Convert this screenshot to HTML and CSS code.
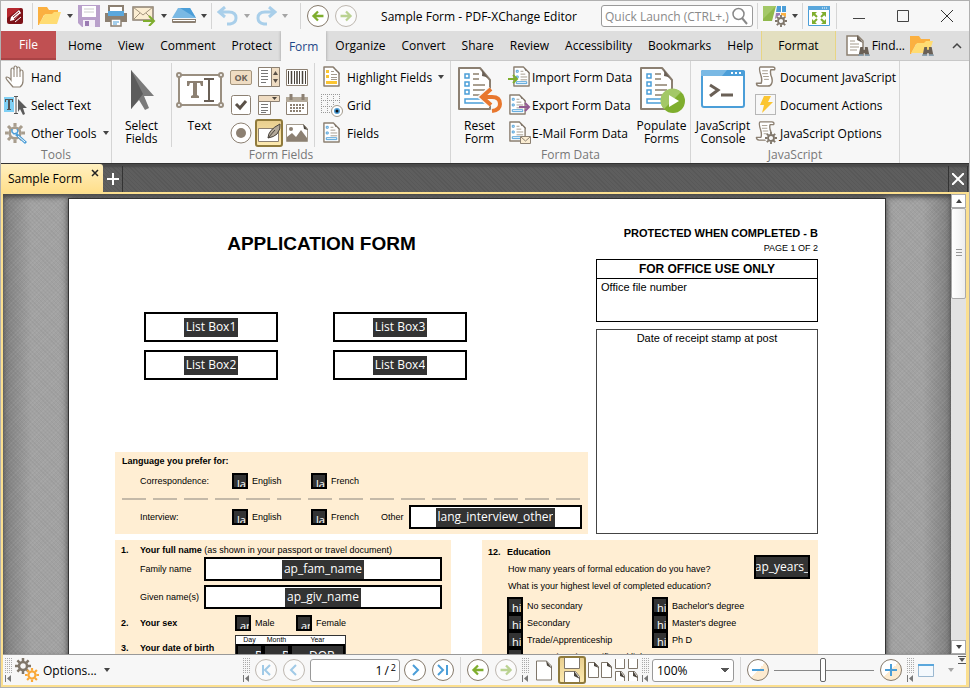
FILE: index.html
```html
<!DOCTYPE html>
<html lang="en">
  <head>
    <meta charset="UTF-8" />
    <meta name="viewport" content="width=device-width, initial-scale=1.0" />
    <title>Sample Form - PDF-XChange Editor</title>
    <link rel="stylesheet" href="styles.css">
  </head>
  <body>
    <!-- shared icons -->
    <svg class="sprite" width="0" height="0">
      <symbol id="folder" viewBox="0 0 24 20">
        <path d="M0 1h9l2 3h9v5H6L1 19H0z" fill="#fbb040" />
        <path d="M7 8h7l2-2h7l-4 12H1z" fill="#ffdc73" />
      </symbol>
      <symbol id="doc" viewBox="0 0 20 22">
        <path d="M2 1h10l6 6v14H2z" fill="#fff" stroke="#8c8072" stroke-width="1.500" stroke-linejoin="round" />
        <path d="M11 0l8 9q-1-4-5-4-1-4-3-5z" fill="#6a6056" />
        <path d="M9 5.500h3M9 8.500h5M9 11.500h7M9 14.500h7" stroke="#a39a8c" />
        <path d="M4.500 4.500h2v2h-2zM4.500 10.500h2v2h-2zM4.500 16.500h11v2h-11z" fill="#fff" stroke="#4b9ed8" />
      </symbol>
      <symbol id="bigdoc" viewBox="0 0 36 44">
        <path d="M2 1h21l10 12v29H2z" fill="#fff" stroke="#8c8072" stroke-width="2" stroke-linejoin="round" />
        <path d="M23 0l11 15q-2-5-9-6 1-6-2-9z" fill="#6a6056" />
        <path d="M16 7h6M16 12h6M16 18h12M16 23h12M16 28h10" stroke="#a99f90" stroke-width="2" />
        <path d="M8 7h4v4H8zM8 15h4v4H8zM8 23h4v4H8zM8 32h20v4H8z" fill="#fff" stroke="#4b9ed8" stroke-width="1.500" />
      </symbol>
      <symbol id="scroll" viewBox="0 0 22 22">
        <path d="M5 1h13q3 0 2 3h-4q-1 4 1 8 1 4 0 6-1 3-4 3H4q-3 0-3-3h5q1-3 0-7Q3 2 5 1z" fill="#fff" stroke="#8c8072" stroke-width="1.500" stroke-linejoin="round" />
        <path d="M7 5h6M7 8h6M8 11h6M9 14h5" stroke="#a39a8c" />
      </symbol>
      <symbol id="gear" viewBox="0 0 16 16">
        <circle cx="8" cy="8" r="4" fill="none" stroke="currentColor" stroke-width="2.500" />
        <path d="M8 0v3M8 13v3M0 8h3M13 8h3M2.400 2.400l2.200 2.200M11.400 11.400l2.200 2.200M13.600 2.400l-2.200 2.200M4.600 11.400l-2.200 2.200" stroke="currentColor" stroke-width="2.500" />
      </symbol>
      <symbol id="binoc" viewBox="0 0 12 12">
        <path d="M2 1h3v3h2V1h3l2 10H7V8H5v3H0z" fill="#6a6056" />
        <path d="M0 9h5v2H0zM7 9h5v2H7z" fill="#8aa0b0" />
      </symbol>
      <symbol id="page" viewBox="0 0 16 20">
        <path d="M.500 .500h10l5 5v14H.500z" fill="#fff" stroke="#7f766a" />
        <path d="M10 0l6 8-5-3z" fill="#4a443c" />
      </symbol>
      <symbol id="left" viewBox="0 0 22 22">
        <path d="M17 11H6M11 6l-5 5 5 5" fill="none" stroke="#7fae2e" stroke-width="2.500" />
      </symbol>
      <symbol id="right" viewBox="0 0 22 22">
        <path d="M5 11h11M11 6l5 5-5 5" fill="none" stroke="#7fae2e" stroke-width="2.500" />
      </symbol>
      <symbol id="undo" viewBox="0 0 22 20">
        <path d="M8 1L2 6l6 5M3 6h9q7 0 7 6 0 5-6 6h-3" fill="none" stroke="#a9cfea" stroke-width="3" />
      </symbol>
      <symbol id="grip" viewBox="0 0 7 24">
        <path d="M.500 0v16M2.500 0v16M4.500 0v16M6.500 0v16" stroke="#aaa" stroke-dasharray="1 1" />
        <path d="M.500 17v7" stroke="#777" />
        <path d="M6 17v7l-4-3.500z" fill="#777" />
      </symbol>
    </svg>

    <div class="window">
      <header class="titlebar">
        <svg class="logo" width="16" height="16" viewBox="0 0 16 16">
          <rect width="16" height="16" rx="2" fill="#7d1218" />
          <path d="M0 2q0-2 2-2h12L0 10z" fill="#b5282f" />
          <path d="M3 13l1-4 8-7 2 3-7 7z" fill="#fff" />
          <path d="M6 9l6-5M7 11l6-5" stroke="#8a1a1f" />
          <path d="M8 14l6-5" stroke="#fff" />
        </svg>
        <i class="sep"></i>
        <button class="tool" aria-label="Open"><svg width="24" height="20"><use href="#folder" /></svg></button>
        <button class="caret" aria-label="Open menu"></button>
        <button class="tool" aria-label="Save">
          <svg width="22" height="22" viewBox="0 0 22 22">
            <path d="M0 0h22v22H4l-4-4z" fill="#b9a0cb" />
            <path d="M4 1h14v11H4z" fill="#fff" />
            <path d="M6 4h10M6 7h10" stroke="#ccc" />
            <path d="M5 15h12v7H5z" fill="#f4eff7" />
            <path d="M7 16h4v5H7z" fill="#9b7bb3" />
          </svg>
        </button>
        <button class="tool" aria-label="Print">
          <svg width="22" height="22" viewBox="0 0 22 22">
            <path d="M4 1h14v8H4z" fill="#fff" stroke="#8c8072" stroke-width="2" />
            <path d="M3 6h16v5H3z" fill="#5aa7dc" />
            <path d="M0 8h3v3h16V8h3v9H0z" fill="#8c8072" />
            <path d="M6 14h10v7H6z" fill="#fff" stroke="#8c8072" stroke-width="1.500" />
            <path d="M8 17h6M8 19h4" stroke="#4b9ed8" />
          </svg>
        </button>
        <button class="tool" aria-label="Send by mail">
          <svg width="24" height="20" viewBox="0 0 24 20">
            <path d="M1 1h20v13H1z" fill="#fbedd2" stroke="#8c8072" stroke-width="1.500" />
            <path d="M1 1l10 8L21 1M1 14l7-7M21 14l-7-7" fill="none" stroke="#a3947d" />
            <path d="M11 15h10M17 10l5 5-5 5" fill="none" stroke="#7fae2e" stroke-width="2" />
          </svg>
        </button>
        <button class="caret" aria-label="Mail menu"></button>
        <button class="tool" aria-label="Scan">
          <svg width="24" height="16" viewBox="0 0 24 16">
            <path d="M6 0h12l6 10H0z" fill="#7ab9e4" />
            <path d="M8 0h10l6 10z" fill="#4b9ed8" />
            <path d="M0 11h24v3q0 1-1 1H1q-1 0-1-1z" fill="#8c8072" />
            <path d="M1 12h22v1H1z" fill="#fff" />
          </svg>
        </button>
        <button class="caret" aria-label="Scan menu"></button>
        <i class="sep"></i>
        <button class="tool" aria-label="Undo"><svg width="22" height="20"><use href="#undo" /></svg></button>
        <button class="caret dim" aria-label="Undo menu"></button>
        <button class="tool" aria-label="Redo"><svg class="flip" width="22" height="20"><use href="#undo" /></svg></button>
        <button class="caret dim" aria-label="Redo menu"></button>
        <i class="sep"></i>
        <button class="round" aria-label="Back"><svg width="20" height="20"><use href="#left" /></svg></button>
        <button class="round faded" aria-label="Forward"><svg width="20" height="20"><use href="#right" /></svg></button>
        <h1 class="title">Sample Form - PDF-XChange Editor</h1>
        <label class="launch">
          <input type="text" placeholder="Quick Launch (CTRL+.)" aria-label="Quick Launch" />
          <svg width="16" height="18" viewBox="0 0 16 18">
            <circle cx="6.500" cy="7" r="5.500" fill="none" stroke="#888" stroke-width="1.500" />
            <path d="M10 11l5 6" stroke="#888" stroke-width="2" />
          </svg>
        </label>
        <i class="sep"></i>
        <button class="tool" aria-label="Toolbars">
          <svg width="24" height="21" viewBox="0 0 24 21">
            <path d="M0 0h13L9 15H0z" fill="#8fb84b" />
            <path d="M0 0h13L0 13z" fill="#a3c867" />
            <path d="M14 0h9v6H13z" fill="#4b9ed8" />
            <path d="M18 0h1v6h-1z" fill="#fff" />
            <path d="M13 7h4v6h-5z" fill="#9b7bb3" />
            <path d="M18 7h5v7h-5z" fill="#fbb040" />
            <circle cx="18" cy="15" r="6" fill="#f7f7f7" />
            <use href="#gear" x="12" y="9" width="12" height="12" color="#7f766a" />
          </svg>
        </button>
        <button class="caret" aria-label="Toolbars menu"></button>
        <i class="sep"></i>
        <button class="tool" aria-label="Full screen">
          <svg width="22" height="20" viewBox="0 0 22 20">
            <path d="M.500 .500h21v19H.500z" fill="#fff" stroke="#4b9ed8" />
            <path d="M0 0h22v4H0z" fill="#5aa7dc" />
            <path d="M14 2h1M16 2h1M18 2h1" stroke="#fff" />
            <path d="M4 6h5L4 11zM18 6h-5l5 5zM4 18h5l-5-5zM18 18h-5l5-5z" fill="#7fae2e" />
            <path d="M5 7l4 4M17 7l-4 4M5 17l4-4M17 17l-4-4" stroke="#7fae2e" stroke-width="2" />
          </svg>
        </button>
        <i class="sep last"></i>
        <nav class="controls">
          <button aria-label="Minimize"><svg width="12" height="12"><path d="M0 8.500h12" stroke="#444" /></svg></button>
          <button aria-label="Maximize"><svg width="12" height="12"><path d="M.500 .500h11v11H.500z" fill="none" stroke="#444" /></svg></button>
          <button aria-label="Close"><svg width="12" height="12"><path d="M0 0l12 12M12 0L0 12" stroke="#333" /></svg></button>
        </nav>
      </header>

      <nav class="tabs">
        <button class="file">File</button>
        <button>Home</button>
        <button>View</button>
        <button>Comment</button>
        <button>Protect</button>
        <button class="active">Form</button>
        <button>Organize</button>
        <button>Convert</button>
        <button>Share</button>
        <button>Review</button>
        <button>Accessibility</button>
        <button>Bookmarks</button>
        <button>Help</button>
        <button class="format">Format</button>
        <button class="find">
          <svg width="24" height="22" viewBox="0 0 24 22">
            <path d="M1 1h11l5 5v14H1z" fill="#fff" stroke="#8c8072" stroke-width="1.500" />
            <path d="M11 0l6 8-6-3z" fill="#6a6056" />
            <path d="M4 6h5M4 9h9M4 12h9M4 15h7" stroke="#a39a8c" />
            <use href="#binoc" x="12" y="11" width="12" height="11" />
          </svg>
          Find...
        </button>
        <button class="find" aria-label="Search folder">
          <svg width="24" height="22" viewBox="0 0 24 22">
            <use href="#folder" width="24" height="20" />
            <use href="#binoc" x="12" y="11" width="12" height="11" />
          </svg>
        </button>
        <button class="collapse" aria-label="Collapse ribbon"><svg width="10" height="7"><path d="M1 6l4-4 4 4" fill="none" stroke="#444" stroke-width="1.500" /></svg></button>
      </nav>

      <section class="ribbon">
        <div class="group tools">
          <div class="items">
            <div class="column">
              <button class="row">
                <svg width="24" height="24" viewBox="0 0 24 24">
                  <path d="M9 22l-6-7q-2-3 0-3 2 0 4 3V5q0-2 1.500-2T10 5V3q0-2 1.500-2T13 3v1q0-2 1.500-2T16 4v3q0-2 1.500-2T19 7v9q0 4-3 6z" fill="#fff" stroke="#8c8072" stroke-width="1.200" />
                  <path d="M10 5v7M13 4v8M16 7v5" stroke="#8c8072" />
                </svg>
                Hand
              </button>
              <button class="row">
                <svg width="24" height="24" viewBox="0 0 24 24">
                  <path d="M0 4h10v15H0z" fill="#7fd0f5" />
                  <path d="M1 6h8v3H8V7H6v9h1v1H3v-1h1V7H2v2H1z" fill="#555" />
                  <path d="M10 3.500h4M12 4v16M10 20.500h4" stroke="#555" />
                  <path d="M14 6l9 9h-4l2 6-2 1-3-6-2 3z" fill="#5b5b5b" />
                </svg>
                Select Text
              </button>
              <button class="row">
                <svg width="24" height="24" viewBox="0 0 24 24">
                  <use href="#gear" x="1" y="2" width="20" height="20" color="#a89d8d" />
                  <circle cx="11" cy="12" r="4" fill="#f7f7f7" />
                  <path d="M12 13l10 9" stroke="#4b9ed8" stroke-width="3" />
                  <path d="M14 15l7 6" stroke="#fff" />
                  <path d="M8 8v3l2 2 3-1 1-2-1-2" fill="none" stroke="#4b9ed8" stroke-width="1.500" />
                </svg>
                Other Tools
                <span class="arrow"></span>
              </button>
            </div>
          </div>
          <h2>Tools</h2>
        </div>

        <div class="group fields">
          <div class="items">
            <button class="big">
              <svg width="24" height="46" viewBox="0 1 24 46">
                <path d="M1 4v39l8-9 6 10 4-2-5-12h10z" fill="#7b7b7b" />
                <path d="M1 4v39l12-15z" fill="#5c5c5c" />
              </svg>
              Select<br />Fields
            </button>
            <i class="rule"></i>
            <button class="big">
              <svg width="48" height="46" viewBox="0 2 48 46">
                <path d="M3 10h42v30H3z" fill="#fff" stroke="#9a8f80" stroke-width="2" />
                <path d="M11 16h16v5h-2l-1-3h-3v12l2 1v2h-8v-2l2-1V18h-3l-1 3h-2z" fill="#8c8072" />
                <path d="M28 14h10M33 14v22M28 36h10" stroke="#6a6056" stroke-width="2" />
                <g fill="#fff" stroke="#9a8f80" stroke-width="2"><circle cx="3" cy="10" r="2" /><circle cx="45" cy="10" r="2" /><circle cx="3" cy="40" r="2" /><circle cx="45" cy="40" r="2" /></g>
              </svg>
              Text
            </button>
            <div class="widgets">
              <button class="ok"><span>OK</span></button>
              <button aria-label="List box">
                <svg width="22" height="20" viewBox="0 0 22 20">
                  <path d="M.500 .500h21v19H.500z" fill="#fff" stroke="#8c8072" />
                  <path d="M13.500 .500h8v19h-8z" fill="#efdcc2" stroke="#8c8072" />
                  <path d="M15 8l2.500-4L20 8zM15 12l2.500 4 2.500-4z" fill="#5a5148" />
                  <path d="M3 3.500h7M3 6.500h7M3 9.500h7M3 12.500h7M3 15.500h5" stroke="#777" />
                </svg>
              </button>
              <button aria-label="Barcode">
                <svg width="22" height="17" viewBox="0 0 22 17">
                  <path d="M.500 .500h21v16H.500z" fill="#fff" stroke="#8c8072" />
                  <path d="M2.500 2v13M8.500 2v13M13.500 2v13M19.500 2v13" stroke="#4a443c" />
                  <path d="M5.500 2v13M11 2v13M16.500 2v13" stroke="#4a443c" stroke-width="1.500" />
                </svg>
              </button>
              <button aria-label="Check box">
                <svg width="20" height="20" viewBox="0 0 20 20">
                  <rect x=".500" y=".500" width="19" height="19" rx="2" fill="#fff" stroke="#8c8072" />
                  <path d="M5 9l4 4 6-7" fill="none" stroke="#5a5148" stroke-width="3" />
                </svg>
              </button>
              <button aria-label="Drop-down">
                <svg width="22" height="20" viewBox="0 0 22 20">
                  <path d="M.500 6.500h12v13H.500z" fill="#fff" stroke="#8c8072" />
                  <path d="M.500 .500h21v6H.500z" fill="#efdcc2" stroke="#8c8072" />
                  <path d="M14 2h5l-2.500 3z" fill="#4a443c" />
                  <path d="M3 9.500h7M3 12.500h7M3 15.500h7M3 17.500h5" stroke="#777" />
                </svg>
              </button>
              <button aria-label="Date">
                <svg width="22" height="22" viewBox="0 0 22 22">
                  <path d="M.500 4.500h21v16H.500z" fill="#fff" stroke="#8c8072" />
                  <path d="M0 3h22v5H0z" fill="#b3a999" />
                  <path d="M5 0v6M17 0v6" stroke="#8c8072" stroke-width="3" />
                  <path d="M4 11h14M4 14h14M4 17h11" stroke="#8c8072" stroke-width="2" stroke-dasharray="2 1" />
                </svg>
              </button>
              <button aria-label="Radio button">
                <svg width="22" height="22" viewBox="0 0 22 22">
                  <circle cx="11" cy="11" r="10" fill="#fff" stroke="#8c8072" />
                  <circle cx="11" cy="11" r="5" fill="#8c8072" />
                </svg>
              </button>
              <button class="on" aria-label="Signature">
                <svg width="24" height="22" viewBox="0 0 24 22">
                  <path d="M1.500 6.500h20v13h-20z" fill="#fff" stroke="#8c8072" />
                  <path d="M11 16q0-8 12-14 1 5-3 10-3 3-9 4z" fill="#b3a999" stroke="#4a443c" />
                  <path d="M11 16l7-8" stroke="#4a443c" />
                </svg>
              </button>
              <button aria-label="Image">
                <svg width="22" height="18" viewBox="0 0 22 18">
                  <path d="M.500 .500h17l4 4v13H.500z" fill="#fff" stroke="#a39a8c" />
                  <path d="M1 17v-4l5-4 4 4 5-7 6 8v3z" fill="#8c8072" />
                  <circle cx="5" cy="5" r="2" fill="#8c8072" />
                  <path d="M17 0l5 6-4-1z" fill="#4a443c" />
                </svg>
              </button>
            </div>
            <i class="rule"></i>
            <div class="column">
              <button class="row">
                <svg width="24" height="22" viewBox="0 0 24 22">
                  <path d="M4 1h9l6 6v13H4z" fill="#fff" stroke="#8c8072" stroke-width="1.500" stroke-linejoin="round" />
                  <path d="M13 0l7 9q-1-4-4-4-1-4-3-5z" fill="#6a6056" />
                  <path d="M11 5.500h3M11 8.500h6M11 11.500h6M11 13.500h6" stroke="#a39a8c" />
                  <path d="M6 4h3v3H6zM6 9h3v3H6zM6 15h11v3H6z" fill="#fbc531" />
                </svg>
                Highlight Fields
                <span class="arrow"></span>
              </button>
              <button class="row">
                <svg width="24" height="24" viewBox="0 0 24 24">
                  <path d="M1 1.500h20M1 7.500h20M1 13.500h12M1 19.500h10M1.500 1v19M7.500 1v19M13.500 1v12M19.500 1v10" stroke="#999" stroke-dasharray="1 1" />
                  <circle cx="17" cy="18" r="5.500" fill="#fff" stroke="#a39a8c" />
                  <circle cx="17" cy="18" r="3" fill="#4b9ed8" /><circle cx="17" cy="18" r="1.500" fill="#111" />
                </svg>
                Grid
              </button>
              <button class="row">
                <svg width="24" height="22" viewBox="0 0 24 22"><use href="#doc" x="2" width="19" height="21" /></svg>
                Fields
              </button>
            </div>
          </div>
          <h2>Form Fields</h2>
        </div>

        <div class="group data">
          <div class="items">
            <button class="big">
              <svg width="46" height="46" viewBox="0 0 46 46">
                <use href="#bigdoc" width="36" height="44" />
                <path d="M34 22l-9 8 9 8M27 30h8q8 0 8 7 0 6-8 7" fill="none" stroke="#f7f7f7" stroke-width="7" />
                <path d="M34 22l-9 8 9 8M27 30h8q8 0 8 7 0 6-8 7" fill="none" stroke="#e8772e" stroke-width="4" />
              </svg>
              Reset<br />Form
            </button>
            <div class="column">
              <button class="row">
                <svg width="24" height="22" viewBox="0 0 24 22">
                  <use href="#doc" x="4" width="19" height="21" />
                  <path d="M0 13h9M5 9l4 4-4 4" fill="none" stroke="#7fae2e" stroke-width="2" />
                </svg>
                Import Form Data
              </button>
              <button class="row">
                <svg width="24" height="22" viewBox="0 0 24 22">
                  <use href="#doc" width="19" height="21" />
                  <path d="M11 13h10M17 9l4 4-4 4" fill="none" stroke="#925a92" stroke-width="2" />
                </svg>
                Export Form Data
              </button>
              <button class="row">
                <svg width="24" height="24" viewBox="0 0 24 24">
                  <use href="#doc" width="19" height="21" />
                  <path d="M12.500 15.500h10v7h-10z" fill="#fbedd2" stroke="#8c8072" />
                  <path d="M13 16l4.500 4 4.500-4" fill="none" stroke="#8c8072" />
                </svg>
                E-Mail Form Data
              </button>
            </div>
            <button class="big">
              <svg width="46" height="46" viewBox="0 0 46 46">
                <use href="#bigdoc" width="36" height="44" />
                <circle cx="34" cy="34" r="12" fill="#7fae2e" />
                <path d="M25 42a12 12 0 0 1 17-17z" fill="#a3c867" />
                <path d="M30 28l10 6-10 6z" fill="#fff" />
              </svg>
              Populate<br />Forms
            </button>
          </div>
          <h2>Form Data</h2>
        </div>

        <div class="group script">
          <div class="items">
            <button class="big">
              <svg width="44" height="46" viewBox="0 2 44 46">
                <rect x="1" y="6" width="42" height="36" rx="2" fill="#fff" stroke="#4b9ed8" stroke-width="2" />
                <path d="M0 7q0-2 2-2h40q2 0 2 2v4H0z" fill="#4b9ed8" />
                <path d="M0 7q0-2 2-2h24l-5 6H0z" fill="#7ab9e4" />
                <path d="M30 8h2M34 8h2M38 8h2" stroke="#fff" stroke-width="2" />
                <path d="M9 20l8 5-8 6M20 30h12" fill="none" stroke="#6a6056" stroke-width="3" />
              </svg>
              JavaScript<br />Console
            </button>
            <div class="column">
              <button class="row">
                <svg width="22" height="22"><use href="#scroll" width="22" height="21" /></svg>
                Document JavaScript
              </button>
              <button class="row">
                <svg width="22" height="22" viewBox="0 0 22 22">
                  <path d="M.500 .500h20v20H.500z" fill="none" stroke="#777" stroke-dasharray="1 1" />
                  <path d="M9 2h7l-3 6h5L7 19l2-8H5z" fill="#fbc531" />
                </svg>
                Document Actions
              </button>
              <button class="row">
                <svg width="22" height="24" viewBox="0 0 22 24">
                  <use href="#scroll" width="21" height="20" />
                  <circle cx="16" cy="17" r="6" fill="#f7f7f7" />
                  <use href="#gear" x="10" y="11" width="12" height="12" color="#7f766a" />
                </svg>
                JavaScript Options
              </button>
            </div>
          </div>
          <h2>JavaScript</h2>
        </div>
      </section>

      <div class="strip">
        <button class="doctab">Sample Form <svg width="8" height="8"><path d="M1 1l6 6M7 1L1 7" stroke="#222" stroke-width="1.500" /></svg></button>
        <button class="add" aria-label="New tab"><svg width="12" height="12"><path d="M6 0v12M0 6h12" stroke="#fff" stroke-width="2" /></svg></button>
        <button class="shut" aria-label="Close"><svg width="12" height="12"><path d="M0 0l12 12M12 0L0 12" stroke="#fff" stroke-width="2" /></svg></button>
      </div>

      <div class="frame">
        <div class="view">
          <main class="canvas">
            <article class="paper">
              <section class="top">
                <div class="left">
                  <h2>APPLICATION FORM</h2>
                  <div class="lists">
                    <label class="field"><input value="List Box1" aria-label="List Box1" /></label>
                    <label class="field"><input value="List Box3" aria-label="List Box3" /></label>
                    <label class="field"><input value="List Box2" aria-label="List Box2" /></label>
                    <label class="field"><input value="List Box4" aria-label="List Box4" /></label>
                  </div>
                  <div class="card language">
                    <h3>Language you prefer for:</h3>
                    <div class="choice">
                      <span>Correspondence:</span>
                      <label class="check"><span class="box"><input type="checkbox" />la</span>English</label>
                      <label class="check"><span class="box"><input type="checkbox" />la</span>French</label>
                    </div>
                    <div class="dashes"></div>
                    <div class="choice">
                      <span>Interview:</span>
                      <label class="check"><span class="box"><input type="checkbox" />la</span>English</label>
                      <label class="check"><span class="box"><input type="checkbox" />la</span>French</label>
                      <label class="other" for="other">Other</label>
                      <div class="field"><input id="other" value="lang_interview_other" /></div>
                    </div>
                  </div>
                </div>
                <div class="office">
                  <strong>PROTECTED WHEN COMPLETED - B</strong>
                  <small>PAGE 1 OF 2</small>
                  <div class="use">
                    <h3>FOR OFFICE USE ONLY</h3>
                    <p>Office file number</p>
                  </div>
                  <div class="receipt">Date of receipt stamp at post</div>
                </div>
              </section>

              <section class="bottom">
                <div class="card person">
                  <p class="question"><b>1.</b><span><b>Your full name</b> (as shown in your passport or travel document)</span></p>
                  <div class="entry"><label for="family">Family name</label><div class="field"><input id="family" value="ap_fam_name" /></div></div>
                  <div class="entry"><label for="given">Given name(s)</label><div class="field"><input id="given" value="ap_giv_name" /></div></div>
                  <div class="question sex">
                    <b>2.</b><b>Your sex</b>
                    <label class="check"><span class="box"><input type="checkbox" />ar</span>Male</label>
                    <label class="check"><span class="box"><input type="checkbox" />ar</span>Female</label>
                  </div>
                  <div class="question birth">
                    <b>3.</b><b>Your date of birth</b>
                    <div class="dob">
                      <label for="day">Day</label><label for="month">Month</label><label for="year">Year</label>
                      <input id="day" value="DOB" /><input id="month" value="DOB" /><input id="year" value="DOB" />
                    </div>
                  </div>
                </div>
                <div class="card education">
                  <div class="years">
                    <div>
                      <p class="question"><b>12.</b><b>Education</b></p>
                      <p class="ask"><label for="years">How many years of formal education do you have?</label></p>
                      <p class="ask">What is your highest level of completed education?</p>
                    </div>
                    <div class="field"><input id="years" value="ap_years_" /></div>
                  </div>
                  <div class="levels">
                    <label class="check"><span class="box"><input type="checkbox" />hi</span>No secondary</label>
                    <label class="check"><span class="box"><input type="checkbox" />hi</span>Bachelor's degree</label>
                    <label class="check"><span class="box"><input type="checkbox" />hi</span>Secondary</label>
                    <label class="check"><span class="box"><input type="checkbox" />hi</span>Master's degree</label>
                    <label class="check"><span class="box"><input type="checkbox" />hi</span>Trade/Apprenticeship</label>
                    <label class="check"><span class="box"><input type="checkbox" />hi</span>Ph D</label>
                    <label class="check wide"><span class="box"><input type="checkbox" />hi</span>Non-university certificate/diploma</label>
                  </div>
                </div>
              </section>
            </article>
          </main>
          <div class="scrollbar">
            <button aria-label="Scroll up"><span class="arrow up"></span></button>
            <div class="track"><div class="thumb"></div></div>
            <button aria-label="Scroll down"><span class="arrow"></span></button>
          </div>
        </div>

        <footer class="status">
          <svg class="grip" width="7" height="24"><use href="#grip" /></svg>
          <button class="options">
            <svg width="24" height="24" viewBox="0 0 24 24">
              <use href="#gear" x="0" y="0" width="16" height="16" color="#7f766a" />
              <use href="#gear" x="10" y="10" width="14" height="14" color="#f9a838" />
            </svg>
            Options...
            <span class="arrow"></span>
          </button>
          <svg class="grip nav" width="7" height="24"><use href="#grip" /></svg>
          <button class="round faded" aria-label="First page"><svg width="20" height="20"><path d="M7 5v10M14 5l-5 5 5 5" fill="none" stroke="#4b9ed8" stroke-width="2" /></svg></button>
          <button class="round faded" aria-label="Previous page"><svg width="20" height="20"><path d="M12 5l-5 5 5 5" fill="none" stroke="#4b9ed8" stroke-width="2" /></svg></button>
          <label class="pageno"><input type="text" value="1" aria-label="Page" />/<sup>2</sup></label>
          <button class="round" aria-label="Next page"><svg width="20" height="20"><path d="M8 5l5 5-5 5" fill="none" stroke="#4b9ed8" stroke-width="2" /></svg></button>
          <button class="round" aria-label="Last page"><svg width="20" height="20"><path d="M5 5l5 5-5 5M14 5v10" fill="none" stroke="#4b9ed8" stroke-width="2" /></svg></button>
          <i class="sep"></i>
          <button class="round" aria-label="Previous view"><svg width="20" height="20"><use href="#left" /></svg></button>
          <button class="round faded" aria-label="Next view"><svg width="20" height="20"><use href="#right" /></svg></button>
          <svg class="grip" width="7" height="24"><use href="#grip" /></svg>
          <div class="layouts">
            <button aria-label="Single page"><svg width="16" height="21"><use href="#page" /></svg></button>
            <button class="on" aria-label="Continuous">
              <svg width="20" height="24" viewBox="0 0 20 24">
                <path d="M2.500 0v10.500h15V0M2.500 24V13.500h11l4 5V24" fill="#fff" stroke="#7f766a" />
                <path d="M12 13l6 8-6-3z" fill="#4a443c" />
              </svg>
            </button>
            <button aria-label="Two pages">
              <svg width="24" height="16" viewBox="0 0 24 16">
                <path d="M.500 .500h6l4 4v11H.500zM13.500 .500h6l4 4v11h-10z" fill="#fff" stroke="#7f766a" />
                <path d="M6 0l5 6-5-2zM19 0l5 6-5-2z" fill="#4a443c" />
              </svg>
            </button>
            <button aria-label="Two pages continuous">
              <svg width="26" height="22" viewBox="0 0 26 22">
                <path d="M1.500 0v9.500h9V0M14.500 0v9.500h9V0M1.500 22v-9.500h6l3 4V22M14.500 22v-9.500h6l3 4V22" fill="#fff" stroke="#7f766a" />
                <path d="M6 12l5 7-5-2zM19 12l5 7-5-2z" fill="#4a443c" />
              </svg>
            </button>
          </div>
          <svg class="grip" width="7" height="24"><use href="#grip" /></svg>
          <select class="zoom" aria-label="Zoom"><option>100%</option></select>
          <i class="sep"></i>
          <button class="round warm" aria-label="Zoom out"><svg width="20" height="20"><path d="M4 10h12" stroke="#4b9ed8" stroke-width="2" /></svg></button>
          <input class="slider" type="range" min="0" max="100" value="49" aria-label="Zoom level" />
          <button class="round warm" aria-label="Zoom in"><svg width="20" height="20"><path d="M4 10h12M10 4v12" stroke="#4b9ed8" stroke-width="2" /></svg></button>
          <svg class="grip end" width="7" height="24"><use href="#grip" /></svg>
          <button class="winview" aria-label="Window view"><svg width="16" height="13"><path d="M.500 .500h15v12H.500z" fill="#f4f9fd" stroke="#9bb8d0" /><path d="M0 1h16" stroke="#5aa7dc" stroke-width="2" /></svg></button>
          <button class="caret dim" aria-label="Window view menu"></button>
          <svg class="more" width="8" height="8"><path d="M0 .500h8M0 7.500h8" stroke="#555" /><path d="M1 2h6L4 6z" fill="#555" /></svg>
        </footer>
      </div>
    </div>
  </body>
</html>
```
FILE: styles.css
```css
* {
  box-sizing: border-box;
}

body {
  margin: 0;
  height: 100vh;
  overflow: hidden;
  font-family: "Open Sans", "Noto Sans", sans-serif;
  font-size: 12px;
  color: #000;
}

h1,
h2,
h3,
p {
  margin: 0;
  font-size: inherit;
  font-weight: normal;
}

button,
input,
select {
  margin: 0;
  padding: 0;
  border: 0;
  background: none;
  font: inherit;
  color: inherit;
}

svg {
  display: block;
  flex: none;
}

.sprite {
  position: absolute;
}

.window {
  height: 100%;
  display: flex;
  flex-direction: column;
  border: 1px solid #b0b0b0;
  background: #f7f7f7;
}

/* title bar */
.titlebar {
  height: 30px;
  flex: none;
  display: flex;
  align-items: center;
  padding-left: 6px;
}

.logo {
  margin-right: 9px;
}

.sep {
  width: 1px;
  height: 26px;
  flex: none;
  background: #d5d5d5;
}

.tool {
  padding-left: 5px;
}

.caret {
  width: 15px;
  height: 22px;
  flex: none;
  display: flex;
  align-items: center;
  justify-content: center;
}

.caret + .tool {
  padding-left: 1px;
}

.caret::before,
.arrow {
  content: "";
  border: 3px solid transparent;
  border-top: 4px solid #444;
  border-bottom: 0;
}

.caret.dim::before {
  border-top-color: #a5a5a5;
}

.caret.dim + .sep {
  margin-left: 8px;
}

.arrow.up {
  border-top: 0;
  border-bottom: 4px solid #444;
}

.flip {
  transform: scaleX(-1);
}

.round {
  width: 22px;
  height: 22px;
  flex: none;
  margin-left: 6px;
  border: 1px solid #85796a;
  border-radius: 50%;
  background: #fff;
}

.round.faded {
  opacity: 0.5;
}

.round.warm {
  background: linear-gradient(135deg, #fff 50%, #fdebd0 50%);
}

.title {
  flex: 1;
  text-align: center;
  white-space: nowrap;
}

.launch {
  width: 152px;
  height: 22px;
  margin-right: 4px;
  padding: 0 4px 0 3px;
  display: flex;
  align-items: center;
  border: 1px solid #9a9a9a;
  border-radius: 3px;
  background: #fff;
}

.launch input {
  flex: 1;
  min-width: 0;
}

.launch input::placeholder {
  color: #8a8a8a;
}

.sep.last {
  margin-left: 6px;
}

.controls {
  display: flex;
}

.controls button {
  width: 44px;
  height: 28px;
  display: flex;
  align-items: center;
  justify-content: center;
}

/* ribbon tabs */
.tabs {
  height: 30px;
  flex: none;
  display: flex;
  background: #dedede;
  border-bottom: 1px solid #c8c8c8;
}

.tabs button {
  flex: none;
  padding: 0 8px;
  white-space: nowrap;
}

.tabs .file {
  width: 55px;
  margin-right: 4px;
  background: #c05052;
  color: #fff;
  border-bottom: 2px solid #a94345;
}

.tabs .active {
  margin: 0 1px -1px;
  background: #f7f7f7;
  box-shadow: 0 0 3px #999;
  clip-path: inset(0 -3px 0 -3px);
  color: #1f4788;
}

.tabs .format {
  padding: 0 16px;
  background: #e3dfc0;
  border-left: 1px solid #e8d584;
  border-right: 1px solid #e8d584;
}

.tabs .find {
  display: flex;
  align-items: center;
  gap: 2px;
  margin-left: 10px;
  padding: 0;
}

.tabs .find + .find {
  margin-left: 5px;
}

.tabs .collapse {
  margin-left: auto;
  padding: 0 7px;
}

/* ribbon */
.ribbon {
  height: 102px;
  flex: none;
  display: flex;
  line-height: 13px;
}

.group {
  flex: none;
  padding-top: 2px;
  border-right: 1px solid #d5d5d5;
}

.group h2 {
  line-height: 16px;
  text-align: center;
  color: #777;
}

.items {
  height: 84px;
  display: flex;
}

.tools {
  width: 111px;
}

.fields {
  width: 339px;
}

.data {
  width: 240px;
}

.script {
  width: 209px;
}

.rule {
  width: 1px;
  background: #d5d5d5;
}

.big {
  width: 59px;
  flex: none;
  display: flex;
  flex-direction: column;
  align-items: center;
  gap: 6px;
  padding-top: 4px;
}

.fields .rule + .big {
  width: 55px;
}

.data .big {
  width: 57px;
}

.script .big {
  width: 64px;
}

.row {
  height: 28px;
  display: flex;
  align-items: center;
  gap: 3px;
  padding-left: 3px;
  white-space: nowrap;
}

.row .arrow,
.options .arrow {
  margin-left: 3px;
}

.fields .row {
  padding-left: 5px;
}

.data .row {
  padding: 0;
  gap: 0;
}

.script .row {
  padding: 0;
}

.data .column {
  flex: 1;
}

.widgets {
  display: grid;
  grid-template-columns: repeat(3, 28px);
  grid-auto-rows: 28px;
  margin-right: 3px;
}

.widgets button {
  display: flex;
  align-items: center;
  justify-content: center;
}

.ok span {
  width: 22px;
  border: 1px solid #a3947d;
  border-radius: 2px;
  background: #efdcc2;
  font-size: 9px;
  font-weight: bold;
  color: #6a6056;
}

.on {
  border: 2px solid #8f7a3c;
  border-radius: 3px;
  background: linear-gradient(#e9cf8f, #fdeab0);
}

/* document tabs */
.strip {
  height: 29px;
  flex: none;
  display: flex;
  border-top: 1px solid #333;
  background: repeating-linear-gradient(45deg, #585858 0 1px, #5e5e5e 1px 3px);
  box-shadow: inset 0 3px 2px #4a4a4a;
}

.doctab {
  width: 102px;
  padding-left: 7px;
  display: flex;
  align-items: center;
  justify-content: space-between;
  border-radius: 0 3px 0 0;
  background: linear-gradient(#fff0c0, #ffdf8c);
}

.doctab svg {
  margin: 0 4px 11px 0;
}

.add,
.shut {
  width: 20px;
  margin-top: 2px;
  display: flex;
  align-items: center;
  justify-content: center;
  border-right: 1px solid #333;
}

.shut {
  margin-left: auto;
  margin-right: 1px;
  border-left: 1px solid #333;
}

/* document view */
.frame {
  flex: 1;
  min-height: 0;
  display: flex;
  flex-direction: column;
  border: 2px solid #fbdf8f;
  border-right-width: 3px;
}

.view {
  flex: 1;
  min-height: 0;
  display: flex;
}

.canvas {
  flex: 1;
  padding-top: 5px;
  overflow: hidden;
  background:
    repeating-linear-gradient(45deg, rgba(0, 0, 0, 0.04) 0 1px, transparent 1px 3px),
    repeating-linear-gradient(-45deg, rgba(255, 255, 255, 0.06) 0 1px, transparent 1px 3px),
    linear-gradient(90deg, #7c7c7c, #a2a2a2 3%, #a2a2a2 97%, #7c7c7c);
  box-shadow: inset 0 3px 5px #444;
}

.scrollbar {
  width: 15px;
  display: flex;
  flex-direction: column;
  background: #e2e2e2;
}

.scrollbar button {
  height: 14px;
  display: flex;
  align-items: center;
  justify-content: center;
  border: 1px solid #aaa;
  background: #fff;
}

.track {
  flex: 1;
}

.thumb {
  height: 21%;
  border: 1px solid #aaa;
  border-radius: 2px;
  background:
    repeating-linear-gradient(#999 0 1px, transparent 1px 3px) center / 6px 9px no-repeat,
    linear-gradient(90deg, #fff, #eee);
}

.paper {
  width: 816px;
  height: 1056px;
  margin: 0 auto;
  padding: 27px 67px 0 46px;
  background: #fff;
  box-shadow: 0 0 0 1px #333, 0 0 7px #222;
  font-family: "Liberation Sans", Arial, sans-serif;
  font-size: 9px;
  line-height: 12px;
}

.top {
  display: grid;
  grid-template-columns: 1fr 222px;
  gap: 8px;
}

.left {
  display: flex;
  flex-direction: column;
}

.left h2 {
  padding: 6px 60px 0 0;
  text-align: center;
  font-size: 19px;
  font-weight: bold;
  line-height: 24px;
}

.lists {
  display: grid;
  grid-template-columns: 134px 134px;
  gap: 8px 55px;
  margin: 56px 0 72px 29px;
}

.field {
  height: 24px;
  display: flex;
  align-items: center;
  justify-content: center;
  border: 2px solid #000;
  background: #fff;
}

.lists .field {
  height: 30px;
}

.field input {
  field-sizing: content;
  height: 19px;
  padding: 0 2px 1px;
  background: #333;
  color: #fff;
  font-family: "Open Sans", "Noto Sans", sans-serif;
  font-size: 12px;
}

.card {
  background: #ffeed3;
}

.card h3,
.card b {
  font-weight: bold;
}

.language {
  height: 82px;
  padding: 3px 6px 0 7px;
}

.choice {
  display: flex;
  align-items: center;
  height: 24px;
  margin-top: 2px;
  padding-left: 18px;
}

.choice > span {
  width: 92px;
}

.check {
  display: flex;
  align-items: center;
  gap: 4px;
}

.choice .check {
  width: 79px;
}

.box {
  position: relative;
  width: 16px;
  height: 16px;
  flex: none;
  overflow: hidden;
  border: 2px solid #000;
  background: #333;
  padding: 2px 0 0 3px;
  color: #fff;
  font-family: "Open Sans", "Noto Sans", sans-serif;
  font-size: 11px;
  line-height: 14px;
}

.box input {
  position: absolute;
  inset: 0;
  appearance: none;
}

.dashes {
  height: 2px;
  margin-top: 5px;
  background: repeating-linear-gradient(90deg, #c4b9a8 0 24px, transparent 24px 31px);
}

.dashes + .choice {
  margin-top: 5px;
}

.other {
  margin-left: -9px;
  width: 28px;
}

.choice .field {
  flex: 1;
}

.office {
  display: flex;
  flex-direction: column;
  padding-top: 1px;
  text-align: right;
  font-size: 11px;
}

.office small {
  margin: 3px 0 5px;
  font-size: 9px;
}

.use {
  height: 63px;
  border: 1px solid #000;
  text-align: left;
}

.use h3 {
  border-bottom: 1px solid #000;
  text-align: center;
  font-size: 12px;
  font-weight: bold;
  line-height: 18px;
}

.use p {
  padding: 2px 4px;
}

.receipt {
  flex: 1;
  margin-top: 7px;
  padding-top: 2px;
  border: 1px solid #444;
  text-align: center;
}

.bottom {
  display: grid;
  grid-template-columns: 1fr 1fr;
  gap: 31px;
  margin-top: 6px;
}

.card.person,
.card.education {
  height: 400px;
  padding: 4px 9px 0 6px;
}

.question {
  display: grid;
  grid-template-columns: 19px 1fr;
  margin-bottom: 1px;
}

.entry {
  display: grid;
  grid-template-columns: 64px 1fr;
  margin: 0 0 4px 19px;
}

.entry label {
  padding-top: 6px;
}

.sex {
  grid-template-columns: 19px 95px 61px 1fr;
  align-items: center;
  height: 20px;
}

.birth {
  grid-template-columns: 19px 95px 111px;
  margin-top: 2px;
}

.birth > b {
  padding-top: 7px;
}

.dob {
  display: grid;
  grid-template-columns: 27px 27px 1fr;
  border: 1px solid #333;
  background: #fff;
  text-align: center;
  font-size: 7px;
  line-height: 8px;
}

.dob input {
  width: 100%;
  height: 22px;
  padding-left: 17px;
  border: 2px solid #000;
  background: #333;
  color: #fff;
  font-family: "Open Sans", "Noto Sans", sans-serif;
  font-size: 12px;
}

.education .question {
  padding-top: 2px;
}

.years {
  display: flex;
  justify-content: space-between;
}

.years .field {
  width: 56px;
  margin: 11px -1px 0 -30px;
  overflow: hidden;
  background: #333;
}

.ask {
  margin: 5px 0 0 20px;
  white-space: nowrap;
}

.levels {
  display: grid;
  grid-template-columns: 145px 1fr;
  grid-auto-rows: 17px;
  margin: 5px 0 0 19px;
}

.levels .box {
  height: 17px;
}

.wide {
  grid-column: 1 / -1;
}

/* status bar */
.status {
  height: 31px;
  flex: none;
  display: flex;
  align-items: center;
  border-top: 1px solid #999;
  background: #f7f7f7;
}

.grip {
  margin-left: 2px;
}

.grip + .round {
  margin-left: 5px;
}

.grip.end {
  margin-left: 6px;
}

.options {
  display: flex;
  align-items: center;
  gap: 4px;
  padding-left: 3px;
}

.nav {
  margin-left: auto;
}

.pageno {
  width: 90px;
  height: 23px;
  margin-left: 5px;
  padding-right: 3px;
  display: flex;
  align-items: center;
  border: 1px solid #999;
  border-radius: 3px;
  background: #fff;
}

.pageno input {
  flex: 1;
  min-width: 0;
  padding-right: 2px;
  text-align: right;
}

.pageno sup {
  padding: 0 0 4px 2px;
  font-size: 9px;
  line-height: 12px;
}

.pageno + .round {
  margin-left: 4px;
}

.round + .grip {
  margin-left: 5px;
}

.status .sep {
  margin-left: 6px;
}

.layouts {
  display: flex;
  align-items: center;
  gap: 2px;
  padding-left: 7px;
}

.layouts .on {
  margin-left: 4px;
  padding: 0 2px;
}

.zoom {
  width: 82px;
  height: 23px;
  margin-left: 3px;
  padding-left: 4px;
  appearance: none;
  border: 1px solid #999;
  border-radius: 3px;
  background:
    linear-gradient(45deg, transparent 50%, #555 50%) right 8px center / 4px 4px no-repeat,
    linear-gradient(-45deg, transparent 50%, #555 50%) right 4px center / 4px 4px no-repeat,
    #fff;
}

.slider {
  width: 100px;
  height: 24px;
  margin-left: 5px;
  appearance: none;
  background: linear-gradient(#888, #888) center / 100% 1px no-repeat;
}

.slider::-webkit-slider-thumb {
  appearance: none;
  width: 6px;
  height: 24px;
  border: 1px solid #666;
  border-radius: 2px;
  background: #fff;
}

.winview {
  margin-left: 4px;
}

.winview + .caret {
  margin-left: 9px;
}

.more {
  align-self: flex-start;
  margin-top: 1px;
}
```
